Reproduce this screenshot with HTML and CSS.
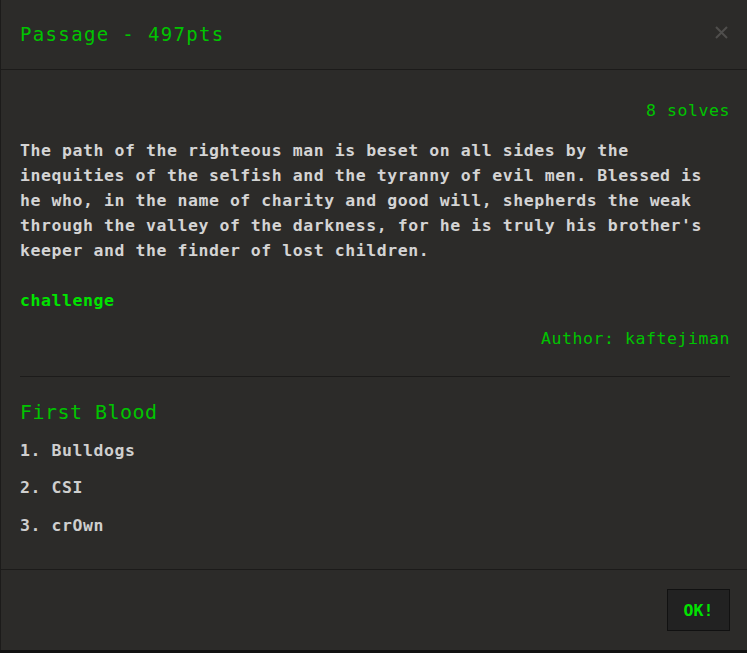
FILE: index.html
```html
<!DOCTYPE html>
<html lang="en">
<head>
<meta charset="utf-8">
<title>Passage</title>
<link rel="stylesheet" href="styles.css">
</head>
<body>
<div class="modal">
  <header class="modal-header">
    <h1 class="modal-title">Passage - 497pts</h1>
    <button class="close" aria-label="Close">
      <svg width="13" height="13" viewBox="0 0 13 13"><path d="M1 1 L12 12 M12 1 L1 12" stroke="#4f4e4c" stroke-width="2" fill="none"/></svg>
    </button>
  </header>
  <section class="modal-body">
    <div class="solves">8 solves</div>
    <p class="desc">The path of the righteous man is beset on all sides by the inequities of the selfish and the tyranny of evil men. Blessed is he who, in the name of charity and good will, shepherds the weak through the valley of the darkness, for he is truly his brother's keeper and the finder of lost children.</p>
    <a class="link" href="#">challenge</a>
    <div class="author">Author: kaftejiman</div>
    <hr class="sep">
    <h2 class="blood-title">First Blood</h2>
    <ol class="blood-list">
      <li>1. Bulldogs</li>
      <li>2. CSI</li>
      <li>3. crOwn</li>
    </ol>
  </section>
  <footer class="modal-footer">
    <button class="ok">OK!</button>
  </footer>
</div>
</body>
</html>
```

FILE: styles.css
```css
html, body {
  margin: 0;
  padding: 0;
  background: #111111;
  overflow: hidden;
  height: 653px;
}
.modal {
  width: 750px;
  height: 650px;
  box-sizing: border-box;
  background: #2c2b29;
  border-left: 1px solid #1c1b1a;
  font-family: "DejaVu Sans Mono", "Liberation Mono", monospace;
  display: flex;
  flex-direction: column;
}
.modal-header {
  height: 70px;
  box-sizing: border-box;
  padding: 15px 20px 15px 19px;
  border-bottom: 1px solid #1c1b1a;
  display: flex;
  align-items: center;
  justify-content: space-between;
}
.modal-title {
  margin: 0;
  font-size: 19px;
  font-weight: normal;
  letter-spacing: 1.35px;
  color: #00c400;
  line-height: 39px;
}
.close {
  background: none;
  border: 0;
  padding: 0;
  margin-right: 2px;
  margin-top: -4px;
  display: flex;
}
.modal-body {
  padding: 28px 20px 0 19px;
  height: 499px;
  box-sizing: border-box;
  font-size: 16.5px;
  letter-spacing: 0.56px;
  line-height: 25px;
}
.solves {
  text-align: right;
  color: #00c400;
}
.desc {
  margin: 15px 0 0;
  color: #d4d4d4;
  font-weight: bold;
}
.link {
  display: block;
  margin-top: 25px;
  color: #00e400;
  font-weight: bold;
  text-decoration: none;
}
.author {
  margin-top: 13px;
  text-align: right;
  color: #00c400;
}
.sep {
  margin: 25px 0 0;
  border: 0;
  border-top: 1px solid #1c1b1a;
}
.blood-title {
  margin: 20px 0 0;
  font-size: 20px;
  font-weight: normal;
  letter-spacing: 0.45px;
  line-height: 30px;
  color: #00c400;
}
.blood-list {
  list-style: none;
  margin: 0;
  padding: 0;
  color: #cfcfcf;
  font-weight: bold;
}
.blood-list li {
  margin-top: 12.5px;
}
.blood-list li:first-child {
  margin-top: 10.5px;
}
.modal-footer {
  flex: 1;
  border-top: 1px solid #1c1b1a;
  padding: 19px 20px 0 19px;
  display: flex;
  justify-content: flex-end;
  align-items: flex-start;
}
.ok {
  width: 63px;
  height: 42px;
  background: #222222;
  border: 1px solid #111111;
  color: #00e400;
  font-family: "DejaVu Sans Mono", "Liberation Mono", monospace;
  font-weight: bold;
  font-size: 16.5px;
  padding: 0;
}
```
